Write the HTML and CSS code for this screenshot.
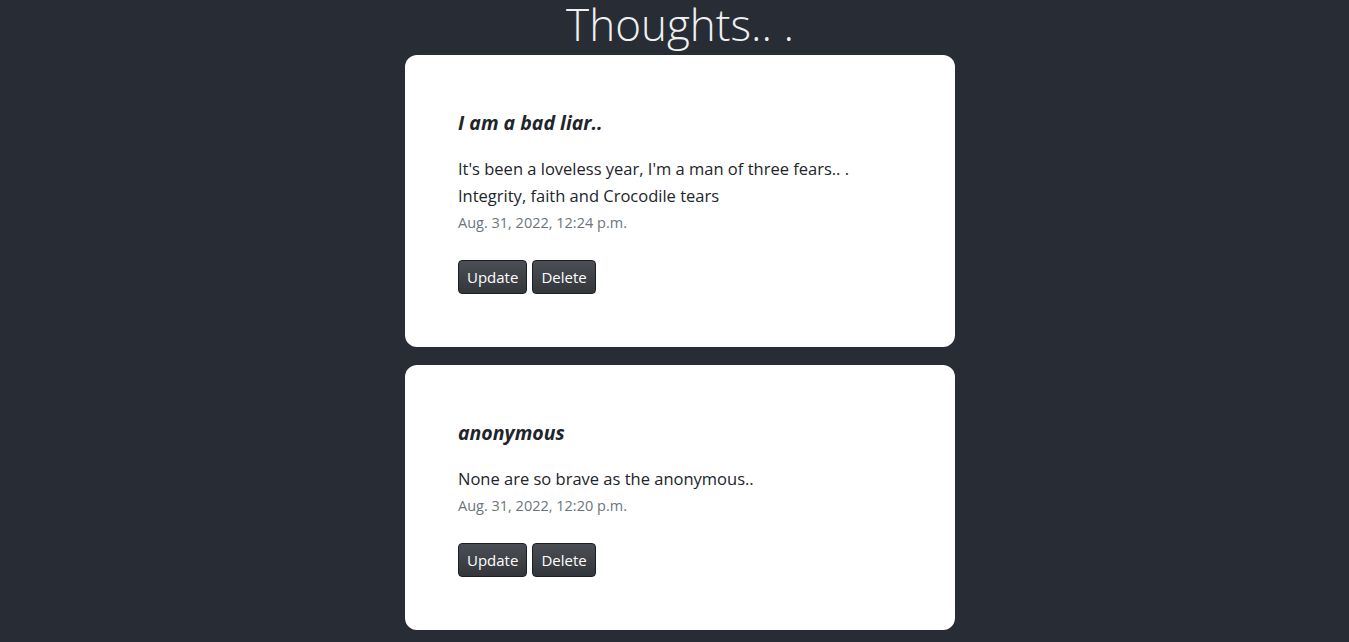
FILE: index.html
```html
<!DOCTYPE html>
<html lang="en">
<head>
<meta charset="utf-8">
<title>Thoughts</title>
<link rel="stylesheet" href="styles.css">
</head>
<body>
<h1 class="page-title">Thoughts.. .</h1>
<main class="list">
  <article class="card">
    <h5 class="card-title">I am a bad liar..</h5>
    <p class="card-text">It's been a loveless year, I'm a man of three fears.. .<br>Integrity, faith and Crocodile tears</p>
    <p class="card-date">Aug. 31, 2022, 12:24 p.m.</p>
    <div class="actions">
      <button class="btn">Update</button>
      <button class="btn">Delete</button>
    </div>
  </article>
  <article class="card">
    <h5 class="card-title">anonymous</h5>
    <p class="card-text">None are so brave as the anonymous..</p>
    <p class="card-date">Aug. 31, 2022, 12:20 p.m.</p>
    <div class="actions">
      <button class="btn">Update</button>
      <button class="btn">Delete</button>
    </div>
  </article>
</main>
</body>
</html>
```
FILE: styles.css
```css
html, body {
  margin: 0;
  padding: 0;
}
body {
  background: #282c34;
  font-family: "Open Sans", "Noto Sans", sans-serif;
  color: #212529;
  padding-left: 11px;
}
.page-title {
  margin: 0 0 7px;
  text-align: center;
  font-weight: 300;
  font-size: 44px;
  line-height: 48px;
  color: #eef0f2;
}
.list {
  width: 550px;
  margin: 0 auto;
  display: flex;
  flex-direction: column;
  gap: 18px;
}
.card {
  background: #fff;
  border-radius: 12px;
  padding: 56px 53px 53px;
}
.card-title {
  margin: 0 0 20px;
  font-size: 19.5px;
  line-height: 24px;
  font-weight: 700;
  font-style: italic;
  color: #212529;
}
.card-text {
  margin: 0;
  font-size: 16.5px;
  line-height: 27px;
  color: #212529;
}
.card-date {
  margin: 3px 0 0;
  font-size: 14.5px;
  line-height: 22px;
  color: #6c757d;
}
.actions {
  margin-top: 26px;
  display: flex;
  gap: 5px;
}
.btn {
  font-family: inherit;
  font-size: 15px;
  line-height: 24px;
  padding: 4px 8px;
  color: #fff;
  background: linear-gradient(#4b4f55, #33373c);
  border: 1px solid #1c1f23;
  border-radius: 4px;
}
```
